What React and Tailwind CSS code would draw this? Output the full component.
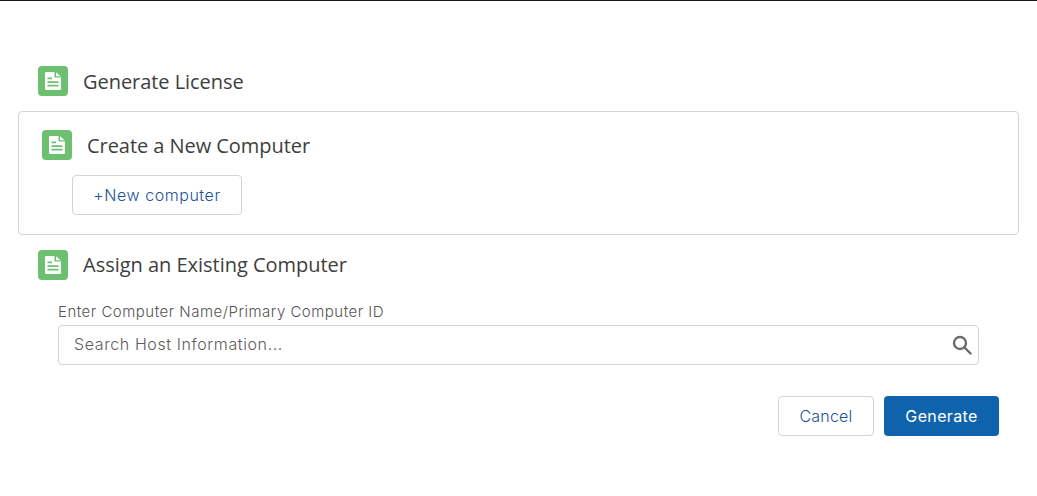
import React from "react";

function DocIcon() {
  return (
    <div className="flex h-[30px] w-[30px] shrink-0 items-center justify-center rounded-[4px] bg-[#6cc070]">
      <svg width="16" height="18" viewBox="0 0 16 18">
        <path d="M1.2 0H9.5V5.5H16V16.8A1.2 1.2 0 0 1 14.8 18H1.2A1.2 1.2 0 0 1 0 16.8V1.2A1.2 1.2 0 0 1 1.2 0Z" fill="#fff" />
        <path d="M11 0.3L15.7 4.2H11Z" fill="#fff" />
        <path d="M2.5 5.5H7V7.3H2.5ZM2.5 9.2H13.5V11H2.5ZM2.5 12.8H13.5V14.6H2.5Z" fill="#6cc070" />
      </svg>
    </div>
  );
}

function Heading({ children, shift }) {
  return (
    <div className="flex items-center gap-[15px]">
      <DocIcon />
      <h2 className={shift ? "h-[30px] font-['Open_Sans',sans-serif] text-[20px] leading-[32px] font-normal tracking-[-0.05px] text-[#3e3e3c]" : "h-[30px] font-['Open_Sans',sans-serif] text-[20px] leading-[30px] font-normal tracking-[-0.02px] text-[#3e3e3c]"}>{children}</h2>
    </div>
  );
}

export default function App() {
  return (
    <div className="h-[496px] w-[1037px] overflow-hidden border-t border-t-[#14142a] bg-white font-['Inter',sans-serif]">
      <div className="flex flex-col px-[18px] pt-[65px]">
        <div className="pl-[20px]">
          <Heading shift>Generate License</Heading>
        </div>
        <section className="mt-[15px] flex h-[124px] flex-col rounded-[4px] border border-[#d4d4d4] pt-[18px] pl-[23px]">
          <Heading shift>Create a New Computer</Heading>
          <button className="mt-[15px] ml-[30px] h-[40px] w-[170px] rounded-[4px] border border-[#d4d4d4] bg-white text-[16px] font-light tracking-[0.55px] text-[#1b5297]">
            +New computer
          </button>
        </section>
        <div className="mt-[15px] pl-[20px]">
          <Heading>Assign an Existing Computer</Heading>
        </div>
        <div className="mt-[22px] flex flex-col pr-[40px] pl-[40px]">
          <label className="h-[18px] text-[15px] leading-[20px] font-light tracking-[0.5px] text-[#555555]">Enter Computer Name/Primary Computer ID</label>
          <div className="mt-[5px] flex h-[40px] items-center justify-between rounded-[4px] border border-[#d4d4d4] pr-[6px] pl-[15px]">
            <span className="pb-[2px] text-[16px] font-light tracking-[0.6px] text-[#5c5c5c]">Search Host Information...</span>
            <svg width="20" height="20" viewBox="0 0 20 20" fill="none" stroke="#6b6b6b" strokeWidth="2.4">
              <circle cx="8" cy="8" r="6" />
              <path d="M12.5 12.5L18.5 18.5" strokeLinecap="round" />
            </svg>
          </div>
          <div className="mt-[31px] mr-[-20px] flex justify-end gap-[10px]">
            <button className="h-[40px] w-[96px] rounded-[4px] border border-[#d4d4d4] bg-white text-[16px] font-light tracking-[0.2px] text-[#1b5297]">Cancel</button>
            <button className="h-[40px] w-[115px] rounded-[4px] bg-[#0f62ac] text-[16px] tracking-[0.35px] text-white">Generate</button>
          </div>
        </div>
      </div>
    </div>
  );
}
